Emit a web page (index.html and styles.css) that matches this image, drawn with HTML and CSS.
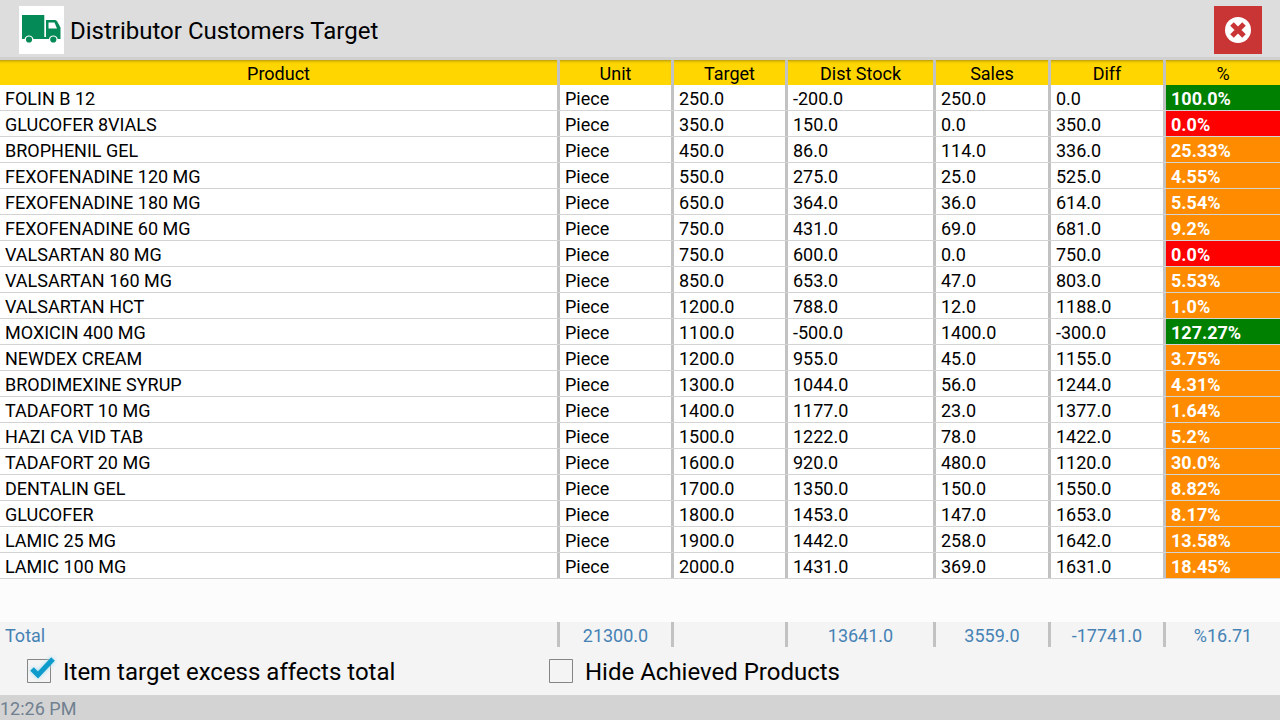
FILE: index.html
```html
<!DOCTYPE html>
<html lang="en">
<head>
    <meta charset="UTF-8">
    <meta name="viewport" content="width=device-width, initial-scale=1">
    <title>Distributor Customers Target</title>
    <link rel="stylesheet" href="styles.css">
</head>
<body>
    <header class="topbar">
        <svg class="logo" viewBox="0 0 45 48" aria-hidden="true">
            <rect width="45" height="48" fill="#fff"/>
            <path fill="#048a56" d="M3 9h22.300v22H28v2H14.400a4.500 4.500 0 0 0-8.800 0H3z"/>
            <path fill="#048a56" fill-rule="evenodd" d="M27 14h9q1.500 0 2.200 1.500l3.300 6V33h-2.800a4.500 4.500 0 0 0-8.800 0H27zM29.500 16.500v6h8.500l-2.500-6z"/>
            <circle cx="10" cy="33.500" r="3.100" fill="#048a56"/>
            <circle cx="34.300" cy="33.500" r="3.100" fill="#048a56"/>
        </svg>
        <h1>Distributor Customers Target</h1>
        <button type="button" class="close-btn" aria-label="Close">
            <svg viewBox="0 0 48 48" aria-hidden="true">
                <circle cx="24" cy="24" r="13" fill="#fff"/>
                <path d="M18 18l12 12M30 18l-12 12" stroke="#c93434" stroke-width="5"/>
            </svg>
        </button>
    </header>

    <main>
        <table class="grid">
            <colgroup>
                <col><col class="c-unit"><col class="c-unit"><col class="c-stock"><col class="c-num"><col class="c-num"><col class="c-pct">
            </colgroup>
            <thead>
                <tr><th>Product</th><th>Unit</th><th>Target</th><th>Dist Stock</th><th>Sales</th><th>Diff</th><th>%</th></tr>
            </thead>
            <tbody>
                <tr><td>FOLIN B 12</td><td>Piece</td><td>250.0</td><td>-200.0</td><td>250.0</td><td>0.0</td><td class="done">100.0%</td></tr>
                <tr><td>GLUCOFER 8VIALS</td><td>Piece</td><td>350.0</td><td>150.0</td><td>0.0</td><td>350.0</td><td class="none">0.0%</td></tr>
                <tr><td>BROPHENIL GEL</td><td>Piece</td><td>450.0</td><td>86.0</td><td>114.0</td><td>336.0</td><td class="part">25.33%</td></tr>
                <tr><td>FEXOFENADINE 120 MG</td><td>Piece</td><td>550.0</td><td>275.0</td><td>25.0</td><td>525.0</td><td class="part">4.55%</td></tr>
                <tr><td>FEXOFENADINE 180 MG</td><td>Piece</td><td>650.0</td><td>364.0</td><td>36.0</td><td>614.0</td><td class="part">5.54%</td></tr>
                <tr><td>FEXOFENADINE 60 MG</td><td>Piece</td><td>750.0</td><td>431.0</td><td>69.0</td><td>681.0</td><td class="part">9.2%</td></tr>
                <tr><td>VALSARTAN 80 MG</td><td>Piece</td><td>750.0</td><td>600.0</td><td>0.0</td><td>750.0</td><td class="none">0.0%</td></tr>
                <tr><td>VALSARTAN 160 MG</td><td>Piece</td><td>850.0</td><td>653.0</td><td>47.0</td><td>803.0</td><td class="part">5.53%</td></tr>
                <tr><td>VALSARTAN HCT</td><td>Piece</td><td>1200.0</td><td>788.0</td><td>12.0</td><td>1188.0</td><td class="part">1.0%</td></tr>
                <tr><td>MOXICIN 400 MG</td><td>Piece</td><td>1100.0</td><td>-500.0</td><td>1400.0</td><td>-300.0</td><td class="done">127.27%</td></tr>
                <tr><td>NEWDEX CREAM</td><td>Piece</td><td>1200.0</td><td>955.0</td><td>45.0</td><td>1155.0</td><td class="part">3.75%</td></tr>
                <tr><td>BRODIMEXINE SYRUP</td><td>Piece</td><td>1300.0</td><td>1044.0</td><td>56.0</td><td>1244.0</td><td class="part">4.31%</td></tr>
                <tr><td>TADAFORT 10 MG</td><td>Piece</td><td>1400.0</td><td>1177.0</td><td>23.0</td><td>1377.0</td><td class="part">1.64%</td></tr>
                <tr><td>HAZI CA VID TAB</td><td>Piece</td><td>1500.0</td><td>1222.0</td><td>78.0</td><td>1422.0</td><td class="part">5.2%</td></tr>
                <tr><td>TADAFORT 20 MG</td><td>Piece</td><td>1600.0</td><td>920.0</td><td>480.0</td><td>1120.0</td><td class="part">30.0%</td></tr>
                <tr><td>DENTALIN GEL</td><td>Piece</td><td>1700.0</td><td>1350.0</td><td>150.0</td><td>1550.0</td><td class="part">8.82%</td></tr>
                <tr><td>GLUCOFER</td><td>Piece</td><td>1800.0</td><td>1453.0</td><td>147.0</td><td>1653.0</td><td class="part">8.17%</td></tr>
                <tr><td>LAMIC 25 MG</td><td>Piece</td><td>1900.0</td><td>1442.0</td><td>258.0</td><td>1642.0</td><td class="part">13.58%</td></tr>
                <tr><td>LAMIC 100 MG</td><td>Piece</td><td>2000.0</td><td>1431.0</td><td>369.0</td><td>1631.0</td><td class="part">18.45%</td></tr>
            </tbody>
        </table>
    </main>

    <section class="summary">
        <table class="grid totals">
            <colgroup>
                <col><col class="c-unit"><col class="c-unit"><col class="c-stock"><col class="c-num"><col class="c-num"><col class="c-pct">
            </colgroup>
            <tbody>
                <tr><th scope="row">Total</th><td>21300.0</td><td></td><td>13641.0</td><td>3559.0</td><td>-17741.0</td><td>%16.71</td></tr>
            </tbody>
        </table>
        <div class="options">
            <label><input type="checkbox" checked><svg class="box" viewBox="0 0 34 34" aria-hidden="true">
                <path class="frame" d="M4.500 5.500h23v23h-23z"/>
                <path class="tick" d="M9 15l6 6L30 5"/>
            </svg><span>Item target excess affects total</span></label>
            <label><input type="checkbox"><svg class="box" viewBox="0 0 34 34" aria-hidden="true">
                <path class="frame" d="M4.500 5.500h23v23h-23z"/>
                <path class="tick" d="M9 15l6 6L30 5"/>
            </svg><span>Hide Achieved Products</span></label>
        </div>
    </section>

    <footer class="statusbar">12:26 PM</footer>
</body>
</html>
```

FILE: styles.css
```css
* {
    margin: 0;
    padding: 0;
    box-sizing: border-box;
}

body {
    min-height: 100vh;
    display: flex;
    flex-direction: column;
    background: #fcfcfc;
    color: #000;
    font-family: Roboto, sans-serif;
    font-size: 18px;
    line-height: 23px;
}

.topbar {
    display: flex;
    align-items: center;
    padding: 6px 18px 6px 19px;
    background: #ddd;
    box-shadow: inset 0 -3px #d0d0d0;
}

.logo {
    width: 45px;
    height: 48px;
    margin-right: 6px;
}

h1 {
    flex: 1;
    padding-top: 2px;
    font-size: 24px;
    font-weight: 400;
}

.close-btn {
    width: 48px;
    height: 48px;
    border: none;
    background: #c93434;
    cursor: pointer;
}

.close-btn svg {
    display: block;
}

main {
    flex: 1;
}

/* product list */
.grid {
    width: 100%;
    table-layout: fixed;
    border-spacing: 0;
}

.c-unit,
.c-pct {
    width: 114px;
}

.c-stock {
    width: 148px;
}

.c-num {
    width: 115px;
}

.grid th,
.grid td {
    padding: 2px 8px 0 5px;
    box-shadow: inset -3px 0 #c2c2c2;
    font-weight: 400;
    text-align: left;
    white-space: nowrap;
}

.grid th:last-child,
.grid td:last-child {
    padding-right: 5px;
    box-shadow: none;
}

.grid thead th {
    background: linear-gradient(#b99d10, #f0ca00 2px, #ffd600 4px);
    text-align: center;
}

main tbody td {
    background: #fff;
    border-bottom: 1px solid #d3d3d3;
}

main tbody .done,
main tbody .none,
main tbody .part {
    color: #fff;
    font-weight: 700;
}

main tbody .done {
    background: #008000;
}

main tbody .none {
    background: #f00;
}

main tbody .part {
    background: #ff8c00;
}

/* totals and filters */
.summary {
    background: #f4f4f4;
}

.totals {
    color: #4682b4;
}

.grid.totals td {
    text-align: center;
}

.options {
    display: grid;
    grid-template-columns: 522px 1fr;
    height: 48px;
    padding-left: 23px;
    font-size: 24px;
}

.options label {
    display: flex;
    align-items: center;
    gap: 6px;
    cursor: pointer;
}

.options span {
    padding-top: 2px;
}

.options input {
    position: absolute;
    opacity: 0;
}

.box {
    width: 34px;
    height: 34px;
}

.frame {
    fill: none;
    stroke: #858585;
}

.tick {
    display: none;
    fill: none;
    stroke: #0d9bcc;
    stroke-width: 5;
    filter: drop-shadow(0 0 2px #9adcf2);
}

input:checked + .box .tick {
    display: block;
}

input:focus-visible + .box {
    outline: 1px solid #0d9bcc;
}

.statusbar {
    padding-top: 2px;
    background: #d3d3d3;
    color: #708090;
}
```
